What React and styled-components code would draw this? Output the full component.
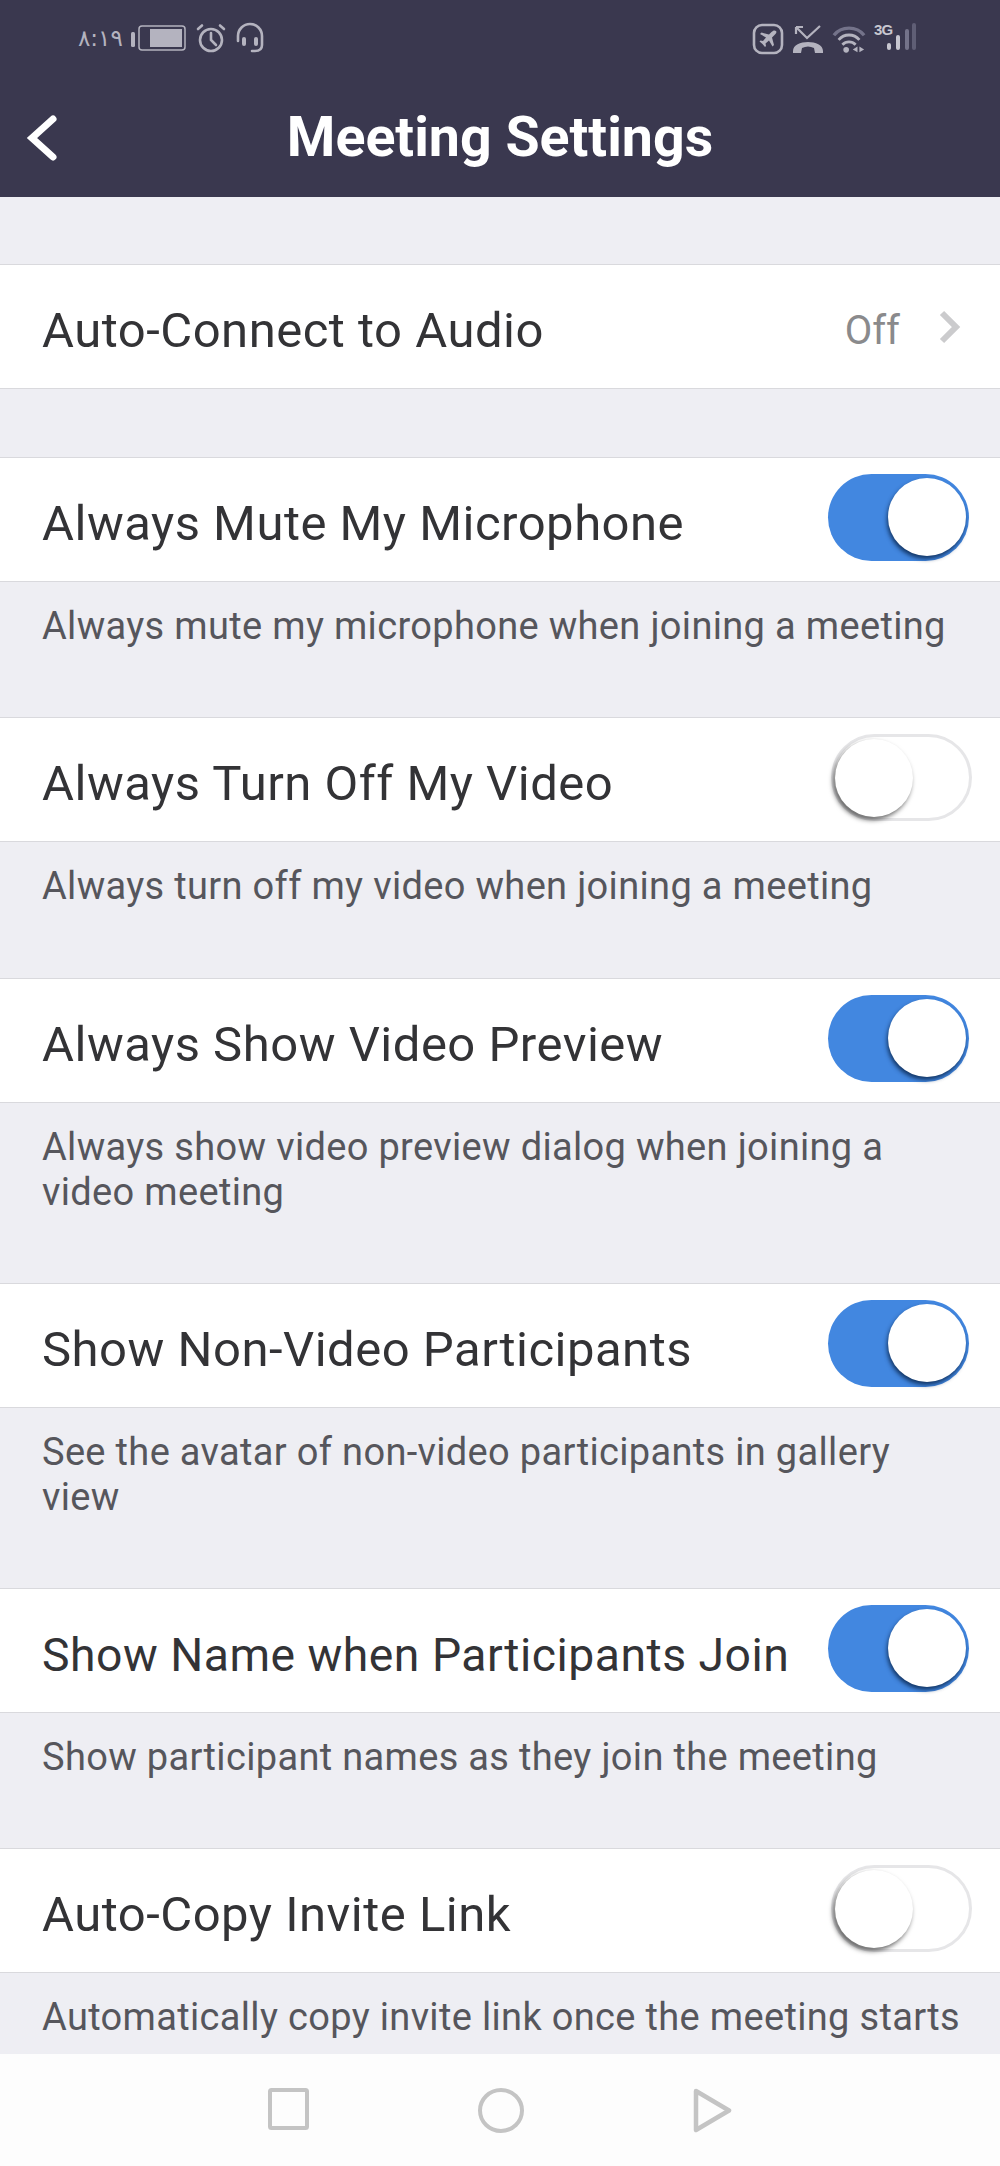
import React from "react";
import styled, { createGlobalStyle } from "styled-components";

const Global = createGlobalStyle`
  html, body { margin: 0; padding: 0; background: #eeeef3; }
  * { box-sizing: border-box; }
`;

const Screen = styled.div`
  width: 1000px; height: 2166px; display: flex; flex-direction: column; overflow: hidden;
  font-family: Roboto, "Noto Sans", sans-serif; background: #eeeef3;
`;
const Header = styled.header`
  height: 197px; flex: none; background: #3a384f; display: flex; flex-direction: column;
`;
const StatusBar = styled.div`
  height: 60px; padding: 22px 81px 0 78px; display: flex; justify-content: space-between; align-items: flex-start;
`;
const StatusGroup = styled.div`
  display: flex; align-items: center; gap: ${p => p.$gap || 6}px; color: #b4b3bf;
`;
const Clock = styled.span`
  font-family: "DejaVu Sans", "Noto Sans", sans-serif; font-size: 23px; line-height: 30px; width: 44px; white-space: nowrap;
`;
const NavBar = styled.div`
  flex: 1; display: grid; grid-template-columns: 1fr auto 1fr; align-items: center; padding: 18px 26px 0;
`;
const Title = styled.h1`
  margin: 0; color: #fff; font-size: 55.5px; font-weight: 700; line-height: 60px; white-space: nowrap;
`;
const Scroll = styled.main`
  flex: 1; min-height: 0; overflow: hidden; padding-top: 67px;
`;
const Row = styled.div`
  height: 125px; background: #fff; border-top: 1px solid #d9d9dd; border-bottom: 1px solid #d9d9dd;
  display: flex; align-items: center; justify-content: space-between; padding: 0 28px 0 42px;
`;
const RowLabel = styled.span`
  font-size: ${p => p.$size || 49}px; color: #333336; white-space: nowrap; letter-spacing: .5px; padding-top: 8px;
`;
const RowValue = styled.span`
  display: flex; align-items: center; gap: 39px; color: #8a8a8c; font-size: 40px; padding: 0 11px 0 0;
`;
const ValueText = styled.span`
  padding-top: 8px;
`;
const Desc = styled.p`
  margin: 0; padding: 22px 30px 0 42px; height: ${p => p.$height}px;
  font-size: 38px; line-height: 45px; color: #56565c; letter-spacing: .33px;
`;
const Spacer = styled.div`height: 68px;`;
const Track = styled.div`
  position: relative; width: 141px; height: 87px; border-radius: 44px; margin-top: -5px;
  background: ${p => p.$on ? "#4287e0" : "#fff"};
  border: ${p => p.$on ? "none" : "3px solid #e6e6e8"};
  margin-right: ${p => p.$on ? 3 : 0}px;
`;
const Knob = styled.div`
  position: absolute; width: 78px; height: 78px; border-radius: 50%; background: #fff;
  ${p => p.$on
    ? "top: 4px; right: 3px; box-shadow: -1px 3px 4px rgba(10,40,80,.85);"
    : "top: 2px; left: 1px; box-shadow: -2px 3px 5px rgba(0,0,0,.6);"}
`;
const BottomNav = styled.nav`
  height: 112px; flex: none; background: #fdfdfd; display: flex; align-items: flex-start; justify-content: center; gap: 169px; padding-top: 34px;
`;

const Back = () => (
  <svg width="34" height="48" viewBox="0 0 34 48" fill="none" stroke="#fff" strokeWidth="7" strokeLinecap="round" strokeLinejoin="miter">
    <path d="M27 5 L6 24 L27 43" />
  </svg>
);
const Chevron = () => (
  <svg width="22" height="34" viewBox="0 0 22 34" fill="none" stroke="#cbcbcd" strokeWidth="6">
    <path d="M3 3 L17 17 L3 31" />
  </svg>
);
const Battery = () => (
  <svg width="56" height="28" viewBox="0 0 56 28">
    <rect x="0" y="8" width="4" height="15" rx="1.5" fill="#b4b3bf" />
    <rect x="8" y="2" width="46" height="24" rx="3" fill="none" stroke="#b4b3bf" strokeWidth="1.5" />
    <rect x="19" y="5" width="32" height="18" fill="#b4b3bf" />
  </svg>
);
const Alarm = () => (
  <svg width="30" height="30" viewBox="0 0 30 30" fill="none" stroke="#b4b3bf" strokeWidth="2.6" strokeLinecap="round">
    <circle cx="15" cy="17" r="11" />
    <path d="M15 10 V17 L20 22 M2 6 L6 2.5 M28 6 L24 2.5" />
  </svg>
);
const Headset = () => (
  <svg width="30" height="32" viewBox="0 0 30 32" fill="none" stroke="#b4b3bf" strokeWidth="2.6" strokeLinecap="round">
    <path d="M3 19 V14 a12 12 0 0 1 24 0 V23 q0 6 -7 6 h-3" />
    <rect x="7" y="15" width="4" height="9" rx="2" fill="#b4b3bf" stroke="none" />
    <rect x="19" y="15" width="4" height="9" rx="2" fill="#b4b3bf" stroke="none" />
  </svg>
);
const Plane = () => (
  <svg width="32" height="32" viewBox="0 0 32 32">
    <rect x="2" y="2" width="28" height="28" rx="8" fill="none" stroke="#b4b3bf" strokeWidth="2.6" />
    <path d="M24 8 C22.500 6.800 21 7.500 19.500 9 L17 11.500 L9.500 9.500 L8 11 L14 14.500 L11 18 L8.500 17.500 L7.500 18.500 L10.500 21 L13 24 L14 23 L13.500 20.500 L17 17.500 L20.500 23.500 L22 22 L20 14.500 L22.500 12 C24 10.500 25 9.200 24 8 Z" fill="#b4b3bf" />
  </svg>
);
const MissedCall = () => (
  <svg width="32" height="30" viewBox="0 0 32 30" fill="none">
    <path d="M4 3 H11 M4 3 V10 M4 3 L15 14 L28 2" stroke="#b4b3bf" strokeWidth="2.2" />
    <path d="M1 27 C1 15 31 15 31 27 L31 29 L23 29 L22 24 C18 22 14 22 10 24 L9 29 L1 29 Z" fill="#b4b3bf" />
  </svg>
);
const Wifi = () => (
  <svg width="34" height="30" viewBox="0 0 36 30" fill="none">
    <path d="M2 11 C10 1 26 1 34 11" stroke="#74738a" strokeWidth="3.600" />
    <path d="M7 16 C13 9 23 9 29 16" stroke="#b4b3bf" strokeWidth="3" />
    <path d="M11 21 C15 17 21 17 25 21" stroke="#b4b3bf" strokeWidth="3" />
    <circle cx="15" cy="26.500" r="3" fill="#b4b3bf" />
    <path d="M27 23 V29 L22 26 Z M29 23 V29 L34 26 Z" fill="#b4b3bf" />
  </svg>
);
const Signal = () => (
  <svg width="34" height="30" viewBox="0 0 34 30">
    <rect x="2" y="21" width="4" height="7" rx="2" fill="#c8c7d0" />
    <rect x="11" y="13" width="4" height="15" rx="2" fill="#c8c7d0" />
    <rect x="20" y="7" width="4" height="21" rx="2" fill="#74738a" />
    <rect x="27" y="1" width="4" height="27" rx="2" fill="#5f5e75" />
  </svg>
);
const NetLabel = styled.span`
  position: absolute; top: 0; left: 0; font-size: 15px; line-height: 15px; font-weight: 700; letter-spacing: -.8px; color: #c8c7d0; font-family: "Liberation Sans", sans-serif;
`;
const SignalWrap = styled.div`position: relative; padding-left: 11px;`;

const Square = () => (
  <svg width="41" height="42" viewBox="0 0 41 42" fill="none" stroke="#c4c4c4" strokeWidth="4" strokeLinejoin="round">
    <rect x="2" y="2" width="37" height="38" rx="1.500" />
  </svg>
);
const Circle = () => (
  <svg width="46" height="45" viewBox="0 0 46 45" fill="none" stroke="#c4c4c4" strokeWidth="4">
    <ellipse cx="23" cy="22.500" rx="21" ry="20.500" />
  </svg>
);
const Tri = () => (
  <svg width="39" height="45" viewBox="0 0 39 45" fill="none" stroke="#c4c4c4" strokeWidth="4.500" strokeLinejoin="round">
    <path d="M3 3 L36 22.500 L3 42 Z" />
  </svg>
);

const items = [
  { label: "Always Mute My Microphone", on: true, desc: "Always mute my microphone when joining a meeting", height: 135 },
  { label: "Always Turn Off My Video", on: false, desc: "Always turn off my video when joining a meeting", height: 136 },
  { label: "Always Show Video Preview", on: true, desc: "Always show video preview dialog when joining a video meeting", height: 180 },
  { label: "Show Non-Video Participants", on: true, desc: "See the avatar of non-video participants in gallery view", height: 180 },
  { label: "Show Name when Participants Join", size: 46.3, on: true, desc: "Show participant names as they join the meeting", height: 135 },
  { label: "Auto-Copy Invite Link", on: false, desc: "Automatically copy invite link once the meeting starts", height: 135 },
];

export default function App() {
  return (
    <Screen>
      <Global />
      <Header>
        <StatusBar>
          <StatusGroup $gap={9}>
            <Clock dir="ltr">۸:۱۹</Clock>
            <Battery />
            <Alarm />
            <Headset />
          </StatusGroup>
          <StatusGroup $gap={8}>
            <Plane />
            <MissedCall />
            <Wifi />
            <SignalWrap><NetLabel>3G</NetLabel><Signal /></SignalWrap>
          </StatusGroup>
        </StatusBar>
        <NavBar>
          <Back />
          <Title>Meeting Settings</Title>
          <span />
        </NavBar>
      </Header>
      <Scroll>
        <Row>
          <RowLabel>Auto-Connect to Audio</RowLabel>
          <RowValue><ValueText>Off</ValueText><Chevron /></RowValue>
        </Row>
        <Spacer />
        {items.map(i => (
          <React.Fragment key={i.label}>
            <Row>
              <RowLabel $size={i.size}>{i.label}</RowLabel>
              <Track $on={i.on}><Knob $on={i.on} /></Track>
            </Row>
            <Desc $height={i.height}>{i.desc}</Desc>
          </React.Fragment>
        ))}
      </Scroll>
      <BottomNav>
        <Square />
        <Circle />
        <Tri />
      </BottomNav>
    </Screen>
  );
}
